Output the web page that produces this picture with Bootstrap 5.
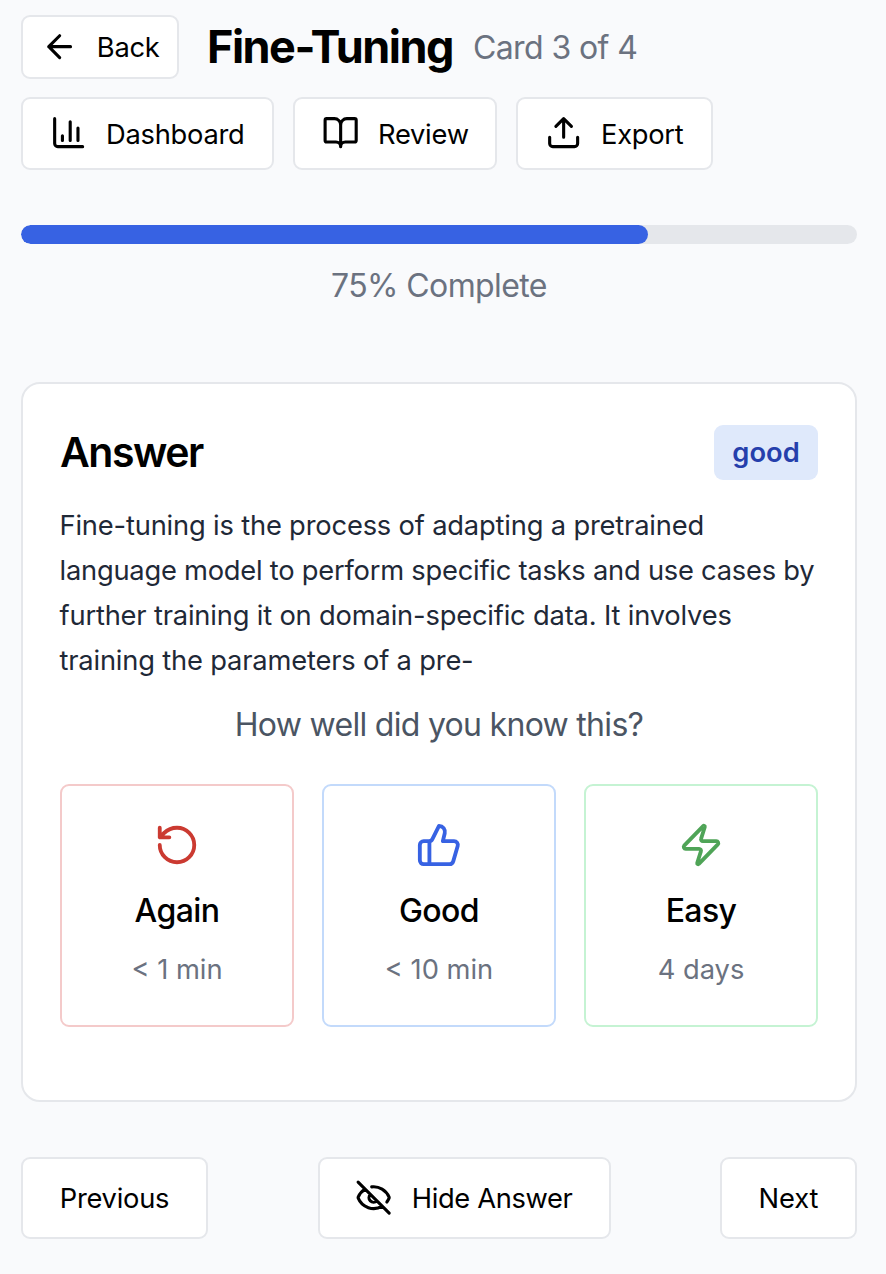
<!DOCTYPE html>
<html lang="en">
<head>
<meta charset="utf-8">
<meta name="viewport" content="width=device-width, initial-scale=1">
<title>Fine-Tuning</title>
<link href="https://cdn.jsdelivr.net/npm/bootstrap@5.3.0/dist/css/bootstrap.min.css" rel="stylesheet">
<style>
body{background:#f9fafc;color:#000;font-family:Inter,"Liberation Sans",sans-serif;font-size:27.3px;line-height:37px}
.page{padding:15px 29px 0 21px}
.ico{width:37.3px;height:37.3px;fill:none;stroke:currentColor;stroke-width:2;stroke-linecap:round;stroke-linejoin:round;flex:none}
.ico-lg{width:46px;height:46px}
.btn-box{--bs-btn-bg:#fff;--bs-btn-border-color:#e5e7eb;--bs-btn-color:#000;--bs-btn-border-width:2px;--bs-btn-border-radius:9px;--bs-btn-padding-y:0;--bs-btn-font-size:27.3px;--bs-btn-line-height:37px;height:73px;white-space:nowrap;display:flex;align-items:center;letter-spacing:-.25px}
.btn-back{height:64px;width:158px;padding-left:17.5px;gap:19px}
.btn-tool{padding-left:26.7px;gap:19px}
.btn-tool span{padding-top:2px}
.btn-tool .ico{margin-top:-1px}
.w-dash{width:253px}.w-rev{width:204px}.w-exp{width:197px}
.btn-foot{height:82px;justify-content:center;gap:19px}
.w-prev{width:187px}.w-hide{width:293px;letter-spacing:-.35px}.w-next{width:137px;letter-spacing:-.1px}
.deck-title{font-size:45px;font-weight:700;line-height:56px;letter-spacing:-1.5px;margin:0 0 0 28px}
.muted{color:#6b7280}
.mid{font-size:32px;line-height:46px;letter-spacing:-.6px}
.count{margin:2px 0 0 20px}
.tools{gap:19px;margin-top:18px}
.progress{--bs-progress-height:19px;--bs-progress-bg:#e5e7eb;--bs-progress-bar-bg:#3762e3;--bs-progress-border-radius:10px;margin-top:55px}
.progress-bar{border-radius:10px}
.pct{margin-top:19px}
.answer{--bs-card-border-width:2px;--bs-card-border-color:#e5e7eb;--bs-card-border-radius:19px;height:720px;margin-top:73px;padding:41px 37px 0}
.answer h2{font-size:41px;font-weight:600;line-height:55px;letter-spacing:-1.5px;margin:0}
.tag{background:#dfe9fb;color:#253fac;border-radius:9px;width:104px;height:55px;font-size:27.3px;font-weight:600;line-height:55px;padding:0}
.prose{color:#1f2937;line-height:45px;margin:23px -4px 0 -.5px;letter-spacing:-.18px}
.prose .snug{letter-spacing:-.23px}
.ask{color:#4b5563;margin:19px 0 0;letter-spacing:-.7px}
.rates{gap:28px;margin-top:36px}
.rate{flex:1 1 0;height:243px;border:2px solid;border-radius:9px;background:#fff;padding-top:36px}
.rate b{font-weight:500;font-size:32px;line-height:46px;letter-spacing:-.6px;color:#000;margin-top:20px}
.rate .muted{margin-top:17px}
.r-again{border-color:#f4caca}.r-again svg{color:#cb3a31}
.r-good{border-color:#c3dafb}.r-good svg{color:#3762e3}
.r-easy{border-color:#c5f3d3}.r-easy svg{color:#4fa457}
.foot{margin-top:55px}
</style>
</head>
<body>
<main class="page">
  <header>
    <div class="d-flex align-items-center">
      <button class="btn btn-box btn-back"><svg class="ico" viewBox="0 0 24 24"><path d="m12 19-7-7 7-7M19 12H5"/></svg><span>Back</span></button>
      <h1 class="deck-title">Fine-Tuning</h1>
      <span class="muted mid count">Card 3 of 4</span>
    </div>
    <nav class="d-flex tools">
      <button class="btn btn-box btn-tool w-dash"><svg class="ico" viewBox="0 0 24 24"><path d="M3 3v16a2 2 0 0 0 2 2h16M18 17V9M13 17V5M8 17v-3"/></svg><span>Dashboard</span></button>
      <button class="btn btn-box btn-tool w-rev"><svg class="ico" viewBox="0 0 24 24"><path d="M12 7v14M3 18a1 1 0 0 1-1-1V4a1 1 0 0 1 1-1h5a4 4 0 0 1 4 4 4 4 0 0 1 4-4h5a1 1 0 0 1 1 1v13a1 1 0 0 1-1 1h-6a3 3 0 0 0-3 3 3 3 0 0 0-3-3z"/></svg><span>Review</span></button>
      <button class="btn btn-box btn-tool w-exp"><svg class="ico" viewBox="0 0 24 24"><path d="M12 3v12M17 8l-5-5-5 5M21 15v4a2 2 0 0 1-2 2H5a2 2 0 0 1-2-2v-4"/></svg><span>Export</span></button>
    </nav>
  </header>

  <div class="progress" role="progressbar" aria-valuenow="75" aria-valuemin="0" aria-valuemax="100"><div class="progress-bar" style="width:75%"></div></div>
  <div class="muted mid pct text-center">75% Complete</div>

  <section class="card answer">
    <div class="d-flex justify-content-between align-items-center">
      <h2>Answer</h2>
      <span class="badge tag">good</span>
    </div>
    <p class="prose">Fine-tuning is the process of adapting a pretrained<br><span class="snug">language model to perform specific tasks and use cases by</span><br>further training it on domain-specific data. It involves<br>training the parameters of a pre-</p>
    <p class="mid ask text-center">How well did you know this?</p>
    <div class="d-flex rates">
      <button class="rate r-again d-flex flex-column align-items-center"><svg class="ico ico-lg" viewBox="0 0 24 24"><path d="M3 12a9 9 0 1 0 9-9 9.75 9.75 0 0 0-6.74 2.74L3 8M3 3v5h5"/></svg><b>Again</b><span class="muted">&lt; 1 min</span></button>
      <button class="rate r-good d-flex flex-column align-items-center"><svg class="ico ico-lg" viewBox="0 0 24 24"><path d="M7 10v12M15 5.88 14 10h5.83a2 2 0 0 1 1.92 2.56l-2.33 8A2 2 0 0 1 17.5 22H4a2 2 0 0 1-2-2v-8a2 2 0 0 1 2-2h2.76a2 2 0 0 0 1.79-1.11L12 2a3.13 3.13 0 0 1 3 3.88Z"/></svg><b>Good</b><span class="muted">&lt; 10 min</span></button>
      <button class="rate r-easy d-flex flex-column align-items-center"><svg class="ico ico-lg" viewBox="0 0 24 24"><path d="M4 14a1 1 0 0 1-.78-1.63l9.9-10.2a.5.5 0 0 1 .86.46l-1.92 6.02A1 1 0 0 0 13 10h7a1 1 0 0 1 .78 1.63l-9.9 10.2a.5.5 0 0 1-.86-.46l1.92-6.02A1 1 0 0 0 11 14z"/></svg><b>Easy</b><span class="muted">4 days</span></button>
    </div>
  </section>

  <footer class="d-flex justify-content-between foot">
    <button class="btn btn-box btn-foot w-prev">Previous</button>
    <button class="btn btn-box btn-foot w-hide"><svg class="ico" viewBox="0 0 24 24"><path d="M10.733 5.076a10.744 10.744 0 0 1 11.205 6.575 1 1 0 0 1 0 .696 10.747 10.747 0 0 1-1.444 2.49M14.084 14.158a3 3 0 0 1-4.242-4.242M17.479 17.499a10.75 10.75 0 0 1-15.417-5.151 1 1 0 0 1 0-.696 10.75 10.75 0 0 1 4.446-5.143M2 2l20 20"/></svg><span>Hide Answer</span></button>
    <button class="btn btn-box btn-foot w-next">Next</button>
  </footer>
</main>
<script src="https://cdn.jsdelivr.net/npm/bootstrap@5.3.0/dist/js/bootstrap.bundle.min.js"></script>
</body>
</html>
